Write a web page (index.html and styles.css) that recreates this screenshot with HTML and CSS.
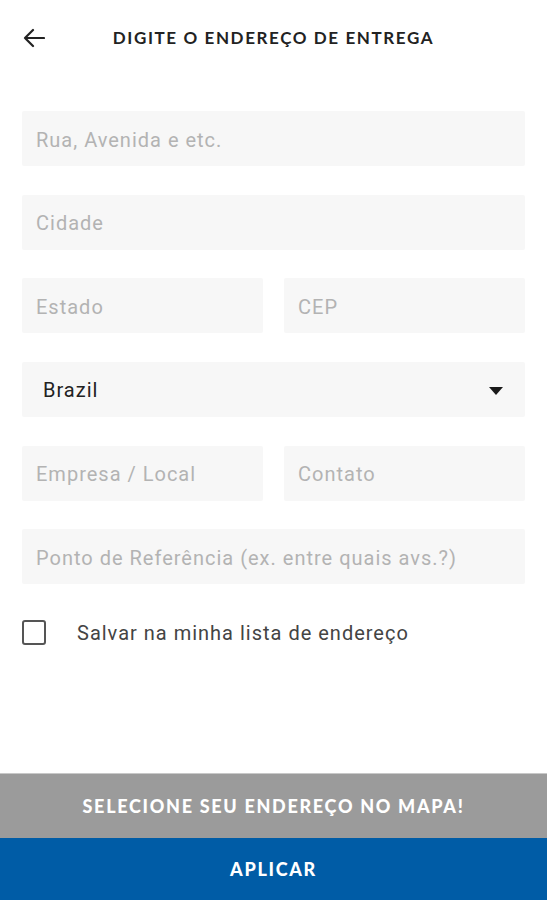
FILE: index.html
```html
<!DOCTYPE html>
<html>
	<head>
		<meta charset="UTF-8">
		<title>Endereço de entrega</title>
		<link rel="stylesheet" href="styles.css">
	</head>
	<body>
		<div class="page">
			<div class="header">
				<svg class="back" width="22" height="20" viewBox="0 0 22 20">
					<path d="M21 10H2M10 2L2 10L10 18" fill="none" stroke="#222" stroke-width="2.2" stroke-linecap="round" stroke-linejoin="round"/>
				</svg>
				<h1 class="title">DIGITE O ENDEREÇO DE ENTREGA</h1>
			</div>

			<div class="form">
				<div class="field">Rua, Avenida e etc.</div>
				<div class="field">Cidade</div>
				<div class="row">
					<div class="field">Estado</div>
					<div class="field">CEP</div>
				</div>
				<div class="field select">
					<span>Brazil</span>
					<span class="caret"></span>
				</div>
				<div class="row">
					<div class="field">Empresa / Local</div>
					<div class="field">Contato</div>
				</div>
				<div class="field">Ponto de Referência (ex. entre quais avs.?)</div>

				<label class="check">
					<span class="box"></span>
					<span>Salvar na minha lista de endereço</span>
				</label>
			</div>
		</div>

		<div class="footer">
			<div class="btn map">SELECIONE SEU ENDEREÇO NO MAPA!</div>
			<div class="btn apply">APLICAR</div>
		</div>
	</body>
</html>
```

FILE: styles.css
```css
*{
	margin: 0;
	padding: 0;
	box-sizing: border-box;
}
body{
	background: #fff;
	font-family: Roboto, "Noto Sans", sans-serif;
	height: 900px;
	display: flex;
	flex-direction: column;
}
.page{
	flex: 1;
}
.header{
	display: flex;
	align-items: center;
	height: 75px;
	padding: 0 23px;
}
.back{
	display: block;
}
.title{
	flex: 1;
	text-align: center;
	font-family: Lato, sans-serif;
	font-weight: 700;
	font-size: 17px;
	letter-spacing: 1.6px;
	color: #222;
	margin-right: 22px;
}

.form{
	padding: 36px 22px 0;
	display: flex;
	flex-direction: column;
	gap: 28.7px;
}
.field{
	height: 55px;
	background: #f7f7f7;
	border-radius: 2px;
	display: flex;
	align-items: center;
	padding: 2px 14px 0;
	font-size: 20px;
	letter-spacing: 1px;
	color: #b3b3b3;
}
.row{
	display: flex;
	gap: 21px;
}
.row .field{
	flex: 1;
}
.select{
	color: #222;
	padding: 0 22px 0 21px;
	justify-content: space-between;
}
.caret{
	width: 0;
	height: 0;
	border-left: 7px solid transparent;
	border-right: 7px solid transparent;
	border-top: 8px solid #1a1a1a;
	margin-top: 3px;
}

.check{
	display: flex;
	align-items: center;
	gap: 31px;
	margin-top: 7px;
	font-size: 20px;
	letter-spacing: 1px;
	color: #444;
}
.check .box{
	width: 24px;
	height: 25px;
	border: 2px solid #555;
	border-radius: 3px;
}

.footer .btn{
	display: flex;
	align-items: center;
	justify-content: center;
	color: #fff;
	font-family: Lato, sans-serif;
	font-weight: 900;
	font-size: 18px;
	letter-spacing: 1.7px;
}
.map{
	height: 65px;
	background: #9b9b9b;
	border-top: 1px solid #c8c8c8;
}
.apply{
	height: 62px;
	background: #005ca6;
}
```
